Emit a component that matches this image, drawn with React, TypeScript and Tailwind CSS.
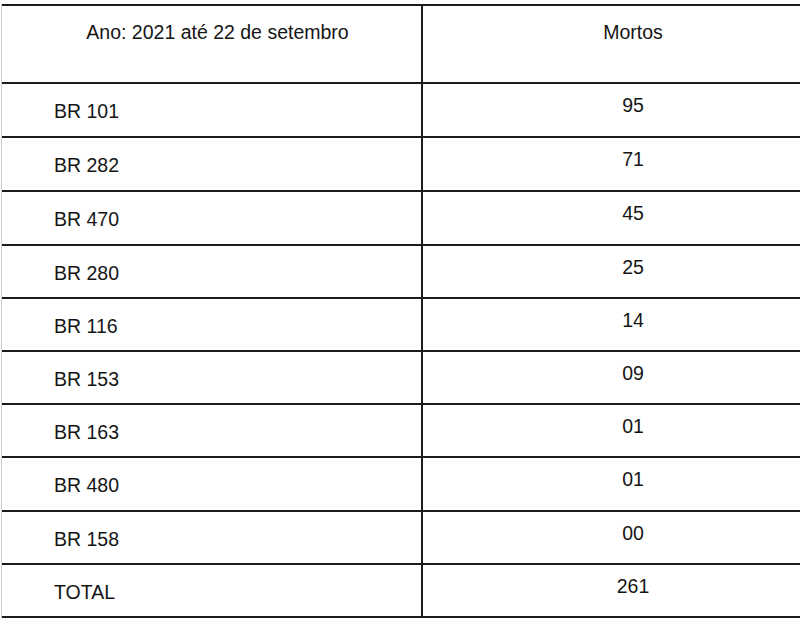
const rows: { road: string; dead: string; h: string }[] = [
  { road: "BR 101", dead: "95", h: "h-[54px]" },
  { road: "BR 282", dead: "71", h: "h-[54px]" },
  { road: "BR 470", dead: "45", h: "h-[54px]" },
  { road: "BR 280", dead: "25", h: "h-[53px]" },
  { road: "BR 116", dead: "14", h: "h-[53px]" },
  { road: "BR 153", dead: "09", h: "h-[53px]" },
  { road: "BR 163", dead: "01", h: "h-[53px]" },
  { road: "BR 480", dead: "01", h: "h-[54px]" },
  { road: "BR 158", dead: "00", h: "h-[53px]" },
  { road: "TOTAL", dead: "261", h: "h-[53px]" },
]

export default function App() {
  return (
    <div className="h-[618px] w-[800px] overflow-hidden bg-white pt-[4px] text-[19.5px] text-[#151515] [font-family:'Liberation_Sans',Arial,sans-serif]">
      <div className="ml-px w-[842px] border-l border-[#cfcfcf]">
        <div className="flex h-[80px] border-y-2 border-[#1c1c1c]">
          <div className="w-[421px] shrink-0 border-r-2 border-[#1c1c1c] pl-[12px] pt-[12px] text-center">
            Ano: 2021 até 22 de setembro
          </div>
          <div className="w-[420px] shrink-0 pt-[12px] text-center">Mortos</div>
        </div>
        {rows.map((r) => (
          <div key={r.road} className={`flex border-b-2 border-[#1c1c1c] ${r.h}`}>
            <div className="w-[421px] shrink-0 border-r-2 border-[#1c1c1c] pl-[52px] pt-[13px]">{r.road}</div>
            <div className="w-[420px] shrink-0 pt-[7px] text-center">{r.dead}</div>
          </div>
        ))}
      </div>
    </div>
  )
}
